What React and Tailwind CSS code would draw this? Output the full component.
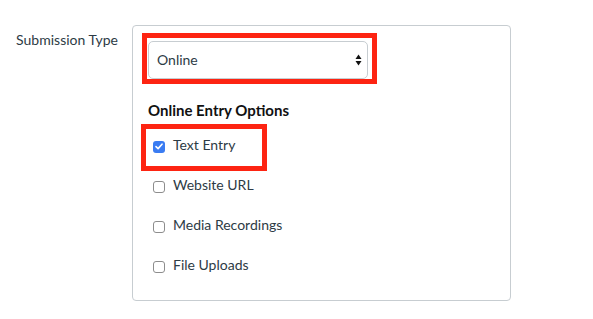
import React from "react";

function Box({ checked }) {
  if (checked) {
    return (
      <span className="mt-[5.5px] flex h-[12px] w-[12px] shrink-0 items-center justify-center rounded-[3px] bg-[#3a7cf2]">
        <svg width="8" height="7" viewBox="0 0 8 7" fill="none">
          <path d="M1 3.6 L3.1 5.6 L7 1.2" stroke="#fff" strokeWidth="1.6" strokeLinecap="round" strokeLinejoin="round" />
        </svg>
      </span>
    );
  }
  return <span className="mt-[5.5px] h-[12px] w-[12px] shrink-0 rounded-[3px] border border-[#8d8d8d] bg-white" />;
}

function Row({ label, checked, boxed }) {
  return (
    <div className="relative flex h-[20px] items-start pl-[5px]">
      {boxed && (
        <div className="absolute left-[-7px] top-[-11px] h-[47px] w-[126px] border-[5px] border-[#fd2412]" />
      )}
      <Box checked={checked} />
      <span className="ml-[8px] leading-[20px]">{label}</span>
    </div>
  );
}

export default function App() {
  return (
    <div
      className="flex min-h-[319px] bg-white pt-[25px] text-[14px] leading-[20px] text-[#2d3b45]"
      style={{ fontFamily: "Lato, 'Open Sans', sans-serif" }}
    >
      <div className="w-[118px] pt-[5px] text-right">Submission Type</div>
      <div className="ml-[14px] h-[276px] w-[379px] rounded-[4px] border border-[#c7cdd1] pl-[15px] pt-[15px]">
        <div className="relative flex h-[38px] w-[220px] items-center justify-between rounded-[5px] border border-[#c7cdd1] pl-[8px] pr-[4px]">
          <div className="absolute bottom-[-6px] left-[-7px] right-[-10px] top-[-9px] border-[5px] border-[#fd2412]" />
          <span>Online</span>
          <svg width="7" height="12" viewBox="0 0 7 12" className="mr-[1px]">
            <path d="M3.5 0.5 L6.5 5 L0.5 5 Z" fill="#111" />
            <path d="M3.5 11.5 L6.5 7 L0.5 7 Z" fill="#111" />
          </svg>
        </div>
        <div className="mt-[21px] text-[15px] font-bold leading-[20px] text-[#111]">Online Entry Options</div>
        <div className="mt-[15px] flex flex-col gap-[20px]">
          <Row label="Text Entry" checked boxed />
          <Row label="Website URL" />
          <Row label="Media Recordings" />
          <Row label="File Uploads" />
        </div>
      </div>
    </div>
  );
}
